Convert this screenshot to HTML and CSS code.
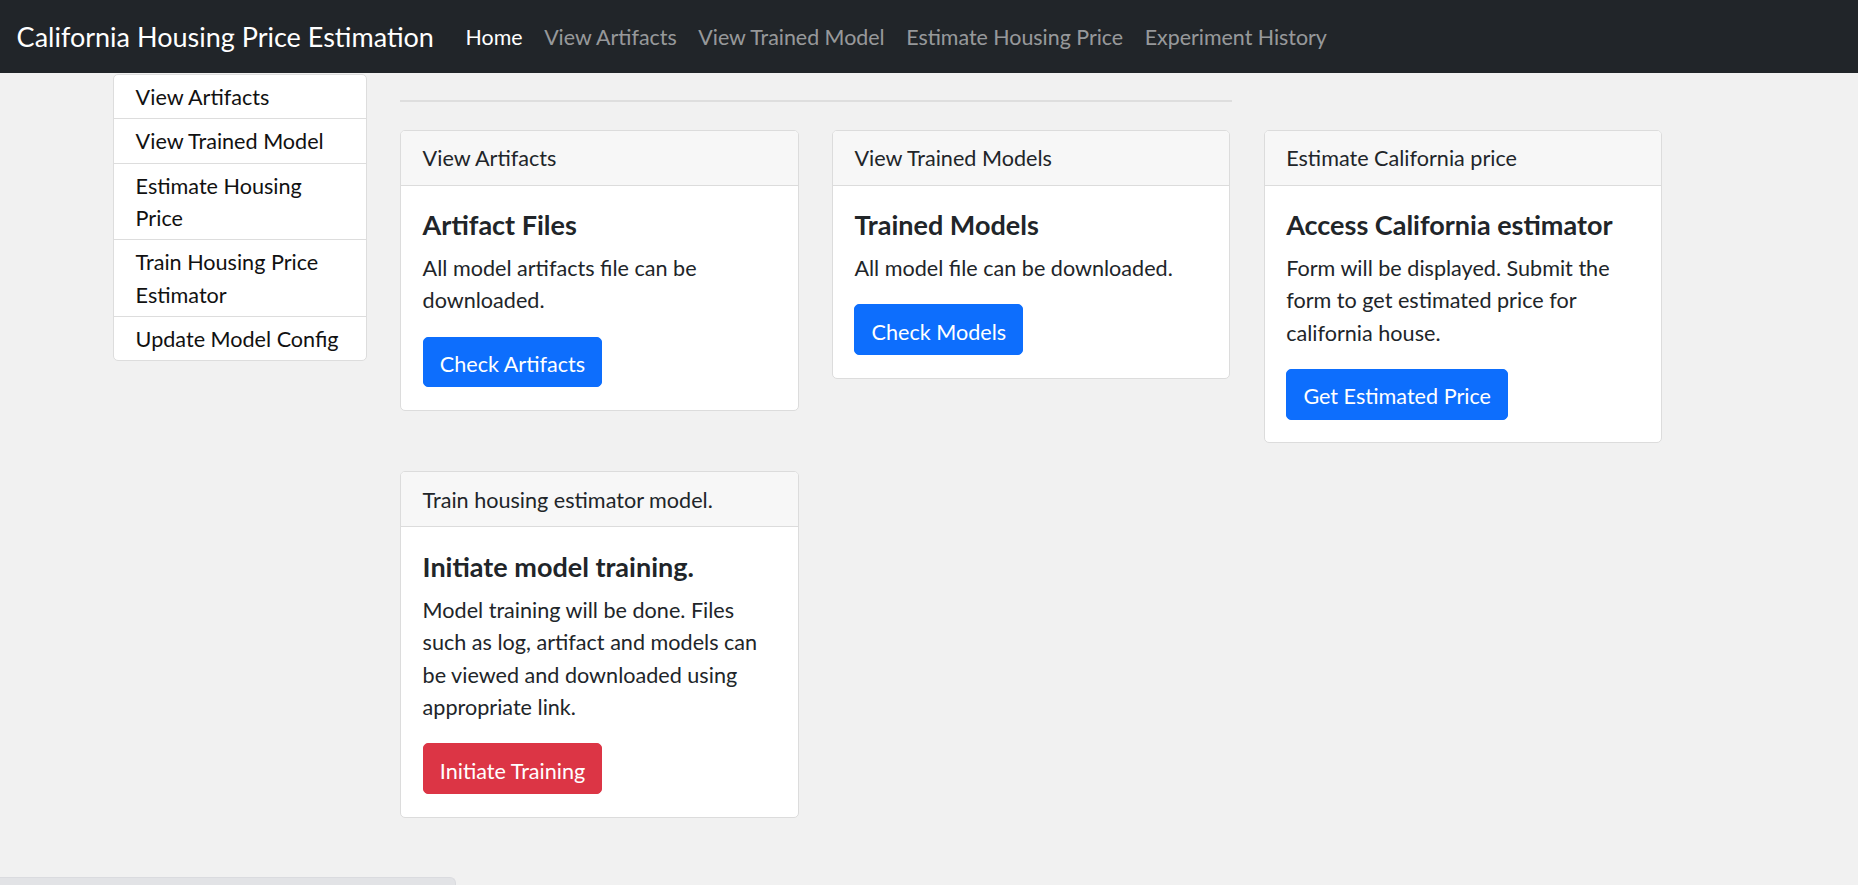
FILE: index.html
```html
<!DOCTYPE html>
<html lang="en">
<head>
<meta charset="utf-8">
<title>California Housing Price Estimation</title>
<link rel="stylesheet" href="styles.css">
</head>
<body>
<nav class="navbar">
  <a class="brand" href="#">California Housing Price Estimation</a>
  <div class="nav-links">
    <a class="nav-link active" href="#">Home</a>
    <a class="nav-link" href="#">View Artifacts</a>
    <a class="nav-link" href="#">View Trained Model</a>
    <a class="nav-link" href="#">Estimate Housing Price</a>
    <a class="nav-link" href="#">Experiment History</a>
  </div>
</nav>
<div class="layout">
  <div class="sidebar">
    <a class="side-item" href="#">View Artifacts</a>
    <a class="side-item" href="#">View Trained Model</a>
    <a class="side-item" href="#">Estimate Housing<br>Price</a>
    <a class="side-item" href="#">Train Housing Price<br>Estimator</a>
    <a class="side-item" href="#">Update Model Config</a>
  </div>
  <main class="main">
    <hr class="rule">
    <div class="cards">
      <div class="card">
        <div class="card-header">View Artifacts</div>
        <div class="card-body">
          <h5 class="card-title">Artifact Files</h5>
          <p class="card-text">All model artifacts file can be<br>downloaded.</p>
          <a class="btn btn-primary" href="#">Check Artifacts</a>
        </div>
      </div>
      <div class="card">
        <div class="card-header">View Trained Models</div>
        <div class="card-body">
          <h5 class="card-title">Trained Models</h5>
          <p class="card-text">All model file can be downloaded.</p>
          <a class="btn btn-primary" href="#">Check Models</a>
        </div>
      </div>
      <div class="card">
        <div class="card-header">Estimate California price</div>
        <div class="card-body">
          <h5 class="card-title">Access California estimator</h5>
          <p class="card-text">Form will be displayed. Submit the<br>form to get estimated price for<br>california house.</p>
          <a class="btn btn-primary" href="#">Get Estimated Price</a>
        </div>
      </div>
      <div class="card">
        <div class="card-header">Train housing estimator model.</div>
        <div class="card-body">
          <h5 class="card-title">Initiate model training.</h5>
          <p class="card-text">Model training will be done. Files<br>such as log, artifact and models can<br>be viewed and downloaded using<br>appropriate link.</p>
          <a class="btn btn-danger" href="#">Initiate Training</a>
        </div>
      </div>
    </div>
  </main>
</div>
<div class="hscroll"></div>
</body>
</html>
```
FILE: styles.css
```css
html, body {
  margin: 0;
  padding: 0;
}
body {
  background: #f1f1f1;
  font-family: Lato, "Liberation Sans", sans-serif;
  font-size: 21.6px;
  line-height: 1.5;
  color: #212529;
  overflow: hidden;
  height: 885px;
}
a {
  text-decoration: none;
}
.navbar {
  box-sizing: border-box;
  height: 73px;
  background: #212529;
  display: flex;
  align-items: center;
  padding: 1px 16.6px 0;
}
.brand {
  font-size: 27px;
  line-height: 40.5px;
  color: #fff;
  margin-right: 20.8px;
  white-space: nowrap;
}
.nav-links {
  display: flex;
}
.nav-link {
  padding: 0 10.8px;
  font-size: 21.4px;
  line-height: 32.4px;
  color: rgba(255, 255, 255, 0.55);
  white-space: nowrap;
}
.nav-link.active {
  color: #fff;
}
.layout {
  display: flex;
  align-items: flex-start;
  padding-left: 113px;
  gap: 33px;
}
.sidebar {
  box-sizing: border-box;
  width: 254px;
  margin-top: 1px;
  background: #fff;
  border: 1px solid #dddddd;
  border-radius: 5px;
  display: flex;
  flex-direction: column;
}
.side-item {
  display: block;
  padding: 6.2px 21.6px 4.7px;
  line-height: 32.4px;
  color: #111;
  white-space: nowrap;
  border-top: 1px solid #dddddd;
}
.side-item:first-child {
  border-top: 0;
}
.main {
  flex: none;
}
.rule {
  width: 832px;
  margin: 26.5px 0 28px;
  border: 0;
  border-top: 2px solid #dedede;
}
.cards {
  display: grid;
  grid-template-columns: repeat(3, 398.5px);
  column-gap: 33.3px;
  row-gap: 28px;
  align-items: start;
}
.card {
  background: #fff;
  border: 1px solid #dcdcdc;
  border-radius: 5px;
  overflow: hidden;
}
.card-header {
  background: #f7f7f7;
  padding: 11.8px 21.6px 9.8px;
  line-height: 32.4px;
  border-bottom: 1px solid #dcdcdc;
}
.card-body {
  padding: 21.6px 21.6px 22.8px;
}
.card-title {
  font-size: 27px;
  font-weight: 700;
  line-height: 1.2;
  padding-top: 2.4px;
  margin: 0 0 8.4px;
}
.card-text {
  padding-top: 1.6px;
  margin: 0 0 20px;
  white-space: nowrap;
}
.btn {
  display: inline-block;
  padding: 10.4px 16.2px 5.8px;
  border: 1px solid transparent;
  border-radius: 5px;
  line-height: 32.4px;
  color: #fff;
  vertical-align: top;
}
.btn-primary {
  background: #0d6efd;
  border-color: #0d6efd;
}
.btn-danger {
  background: #dc3545;
  border-color: #dc3545;
}
.hscroll {
  position: fixed;
  left: 0;
  bottom: 0;
  width: 456px;
  height: 8px;
  box-sizing: border-box;
  background: #e2e3e6;
  border-top: 1px solid #dadbdf;
  border-right: 1px solid #dadbdf;
  border-top-right-radius: 6px;
}
```
